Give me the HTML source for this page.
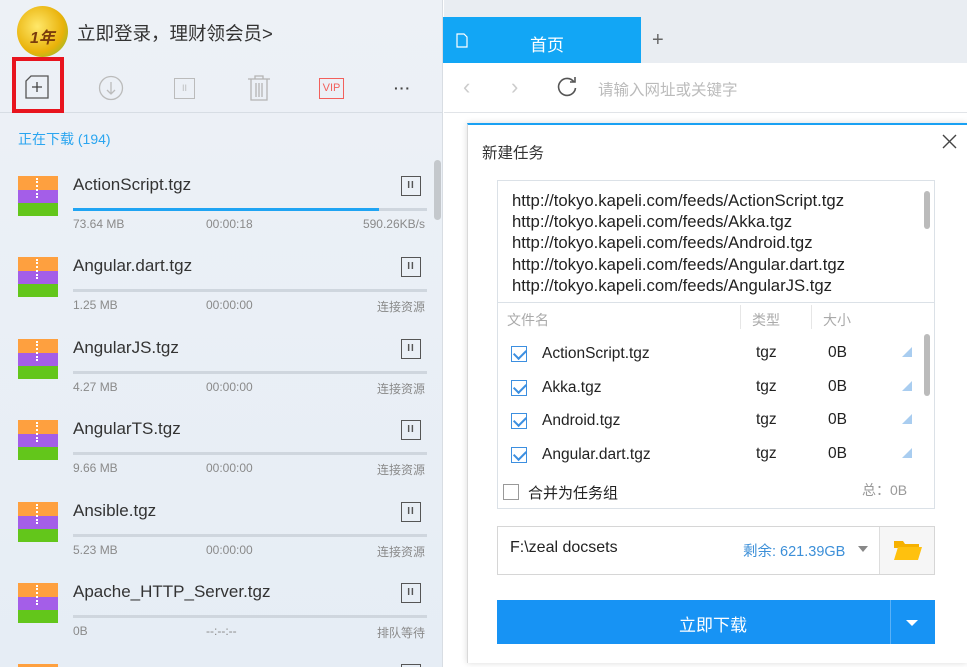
<!DOCTYPE html>
<html><head><meta charset="utf-8"><style>
*{margin:0;padding:0;box-sizing:border-box}
html,body{width:967px;height:667px;overflow:hidden}
body{position:relative;font-family:"Liberation Sans","Noto Sans CJK SC",sans-serif;background:#fff}
.a{position:absolute}
#left{left:0;top:0;width:443px;height:667px;overflow:hidden;background:linear-gradient(#edf1f6,#e6edf5);border-right:1px solid #d8dde3}
.t{font-size:17px;color:#333;white-space:nowrap}
.s{font-size:12px;color:#8a8a8a;white-space:nowrap}
.zip{width:40px;height:40px}
.pb{width:20px;height:20px;border:1.5px solid #555;font-size:10px;font-weight:bold;color:#555;text-align:center;line-height:17px;letter-spacing:1px}
.bar{height:3px;background:#cfd6de;width:354px}
.cb{width:16px;height:16px;border:1.5px solid #3c8fe0;background:#fff}
.cb:after{content:"";position:absolute;left:4px;top:0px;width:6px;height:10px;border:solid #3c8fe0;border-width:0 2px 2px 0;transform:rotate(45deg)}
.tri{width:0;height:0;border-left:10px solid transparent;border-bottom:10px solid #a9cdf0}
.u{font-size:16.7px;color:#222;line-height:21.2px;white-space:nowrap}
.r{font-size:15.5px;color:#222;white-space:nowrap}
</style></head><body>
<div id="left" class="a">
 <div class="a" style="left:17px;top:6px;width:51px;height:51px;border-radius:50%;background:radial-gradient(circle at 40% 40%,#ffe86a,#e9b20a 60%,#6bbf3b);"></div>
 <div class="a" style="left:30px;top:24px;font-size:16px;font-weight:bold;font-style:italic;color:#7a3c0c">1年</div>
 <div class="a t" style="left:77px;top:20px;font-size:18.5px;color:#333">立即登录，理财领会员&gt;</div>
 <div class="a" style="left:0;top:112px;width:443px;height:1px;background:#d7dde4"></div>
 <div class="a" style="left:12px;top:57px;width:52px;height:56px;border:4px solid #e8141e"></div>
 <svg class="a" style="left:25px;top:75px" width="24" height="24" viewBox="0 0 24 24"><path d="M6 1H23V23H1V6Z" fill="none" stroke="#555" stroke-width="1.3"/><path d="M12 7V17M7 12H17" stroke="#444" stroke-width="1.3"/></svg>
 <svg class="a" style="left:98px;top:75px" width="26" height="26"><circle cx="13" cy="13" r="11.5" fill="none" stroke="#bbb" stroke-width="1.3"/><path d="M13 7V19M9 15L13 19L17 15" fill="none" stroke="#bbb" stroke-width="1.3"/></svg>
 <div class="a" style="left:174px;top:78px;width:21px;height:21px;border:1.3px solid #bbb;font-size:9px;color:#bbb;text-align:center;line-height:18px">II</div>
 <svg class="a" style="left:246px;top:74px" width="26" height="28"><path d="M2 5H24M9 5V2H17V5M5 5V26H21V5M10 9V23M13 9V23M16 9V23" fill="none" stroke="#b4b4b4" stroke-width="1.3"/></svg>
 <div class="a" style="left:319px;top:78px;width:25px;height:21px;border:1.3px solid #f2605c;font-size:11px;color:#f2605c;text-align:center;line-height:19px">VIP</div>
 <div class="a" style="left:394px;top:80px;font-size:14px;color:#444;letter-spacing:1px;font-weight:bold">···</div>
 <div class="a" style="left:18px;top:129px;font-size:14px;color:#2aa5f0">正在下载 (194)</div>
 <div class="a" style="left:434px;top:160px;width:7px;height:60px;border-radius:4px;background:#c4c8cc"></div>
 <div id="items"></div>
</div>
<div class="a" style="left:444px;top:0;width:523px;height:63px;background:#e9edf2"></div>
<div class="a" style="left:443px;top:17px;width:198px;height:46px;background:#12a6f5"></div>
<svg class="a" style="left:456px;top:33px" width="12" height="15"><path d="M1 1H8L11 4V14H1Z" fill="none" stroke="#fff" stroke-width="1.2"/></svg>
<div class="a" style="left:530px;top:31px;color:#fff;font-size:17px">首页</div>
<div class="a" style="left:652px;top:29px;color:#666;font-size:20px">+</div>
<div class="a" style="left:444px;top:63px;width:523px;height:50px;background:#fff;border-bottom:1px solid #e1e4e8"></div>
<div class="a" style="left:463px;top:74px;color:#ccc;font-size:22px">‹</div>
<div class="a" style="left:511px;top:74px;color:#ccc;font-size:22px">›</div>
<svg class="a" style="left:556px;top:76px" width="22" height="22"><path d="M18 6A8.5 8.5 0 1 0 19.5 12" fill="none" stroke="#555" stroke-width="1.6"/><path d="M14 6H19V1" fill="none" stroke="#555" stroke-width="1.6"/></svg>
<div class="a" style="left:598px;top:78px;color:#bbb;font-size:15.5px">请输入网址或关键字</div>
<div class="a" style="left:467px;top:123px;width:500px;height:540px;background:#fff;border-top:2px solid #1aa1f3;border-left:1px solid #d9d9d9;box-shadow:0 0 6px rgba(0,0,0,.15)"></div>
<div class="a" style="left:482px;top:141px;font-size:15.5px;color:#333">新建任务</div>
<svg class="a" style="left:942px;top:134px" width="15" height="15"><path d="M1 1L14 14M14 1L1 14" stroke="#444" stroke-width="1.4"/></svg>
<div class="a" style="left:497px;top:180px;width:438px;height:329px;border:1px solid #dbe1e7"></div>
<div class="a" style="left:498px;top:302px;width:436px;height:1px;background:#dbe1e7"></div>
<div class="a" style="left:924px;top:191px;width:6px;height:38px;background:#bbb;border-radius:3px"></div>
<div class="a u" style="left:512px;top:190px">http://tokyo.kapeli.com/feeds/ActionScript.tgz<br>http://tokyo.kapeli.com/feeds/Akka.tgz<br>http://tokyo.kapeli.com/feeds/Android.tgz<br>http://tokyo.kapeli.com/feeds/Angular.dart.tgz<br>http://tokyo.kapeli.com/feeds/AngularJS.tgz</div>
<div class="a" style="left:507px;top:310px;font-size:14px;color:#aaa">文件名</div>
<div class="a" style="left:740px;top:305px;width:1px;height:24px;background:#e6e6e6"></div>
<div class="a" style="left:752px;top:310px;font-size:14px;color:#aaa">类型</div>
<div class="a" style="left:811px;top:305px;width:1px;height:24px;background:#e6e6e6"></div>
<div class="a" style="left:823px;top:310px;font-size:14px;color:#aaa">大小</div>
<div class="a" style="left:924px;top:334px;width:6px;height:62px;background:#bbb;border-radius:3px"></div>
<div id="rows"></div>
<div class="a" style="left:503px;top:484px;width:16px;height:16px;border:1px solid #999;background:#fff"></div>
<div class="a r" style="left:528px;top:482px;font-size:15px">合并为任务组</div>
<div class="a" style="left:862px;top:480px;font-size:14px;color:#999">总：0B</div>
<div class="a" style="left:497px;top:526px;width:438px;height:49px;border:1px solid #d6d6d6"></div>
<div class="a" style="left:879px;top:527px;width:55px;height:47px;background:#f6f6f6;border-left:1px solid #ddd"></div>
<svg class="a" style="left:893px;top:539px" width="29" height="22"><path d="M1 2H10L12 5H26V9H1Z" fill="#f6b100"/><path d="M1 21L5 8H29L25 21Z" fill="#ffc10e"/></svg>
<div class="a r" style="left:510px;top:539px;font-size:16px">F:\zeal docsets</div>
<div class="a" style="left:743px;top:540px;font-size:14.5px;color:#3c8fd8">剩余: 621.39GB</div>
<div class="a" style="left:858px;top:546px;border:5px solid transparent;border-top:6px solid #888"></div>
<div class="a" style="left:497px;top:600px;width:438px;height:44px;background:#1793f4"></div>
<div class="a" style="left:890px;top:600px;width:1px;height:44px;background:#5ab1f7"></div>
<div class="a" style="left:679px;top:611px;color:#fff;font-size:17px">立即下载</div>
<div class="a" style="left:906px;top:620px;border:6px solid transparent;border-top:6px solid #fff"></div>
<script>
var it=[["ActionScript.tgz","73.64 MB","00:00:18","590.26KB/s"],["Angular.dart.tgz","1.25 MB","00:00:00","连接资源"],["AngularJS.tgz","4.27 MB","00:00:00","连接资源"],["AngularTS.tgz","9.66 MB","00:00:00","连接资源"],["Ansible.tgz","5.23 MB","00:00:00","连接资源"],["Apache_HTTP_Server.tgz","0B","--:--:--","排队等待"]];
var h="";it.forEach(function(d,i){var y=176+81.4*i;
h+='<div class="a zip" style="left:18px;top:'+y+'px"><div style="height:14px;background:#fea03f"></div><div style="height:13px;background:#a45ee8"></div><div style="height:13px;background:#63c61b"></div><div class="a" style="left:18px;top:2px;width:3px;height:20px;border-left:2px dotted #fff"></div></div>';
h+='<div class="a t" style="left:73px;top:'+(y-1)+'px">'+d[0]+'</div>';
h+='<div class="a pb" style="left:401px;top:'+(y)+'px">II</div>';
h+='<div class="a bar" style="left:73px;top:'+(y+32)+'px">'+(i==0?'<div style="width:306px;height:3px;background:#1fa4f3"></div>':'')+'</div>';
h+='<div class="a s" style="left:73px;top:'+(y+41)+'px">'+d[1]+'</div><div class="a s" style="left:206px;top:'+(y+41)+'px">'+d[2]+'</div><div class="a s" style="right:17px;top:'+(y+41)+'px">'+d[3]+'</div>';});
h+='<div class="a" style="left:18px;top:664px;width:40px;height:3px;background:#fea03f"></div><div class="a" style="left:401px;top:664px;width:20px;height:3px;border:1.5px solid #555;border-bottom:0"></div>';
document.getElementById("items").innerHTML=h;
var r=["ActionScript.tgz","Akka.tgz","Android.tgz","Angular.dart.tgz"],g="";
r.forEach(function(n,i){var y=346+33.7*i;
g+='<div class="a cb" style="left:511px;top:'+y+'px"></div><div class="a r" style="left:542px;top:'+(y-1)+'px">'+n+'</div><div class="a r" style="left:756px;top:'+(y-2)+'px">tgz</div><div class="a r" style="left:828px;top:'+(y-2)+'px">0B</div><div class="a tri" style="left:902px;top:'+(y+1)+'px"></div>';});
document.getElementById("rows").innerHTML=g;
</script>
</body></html>
